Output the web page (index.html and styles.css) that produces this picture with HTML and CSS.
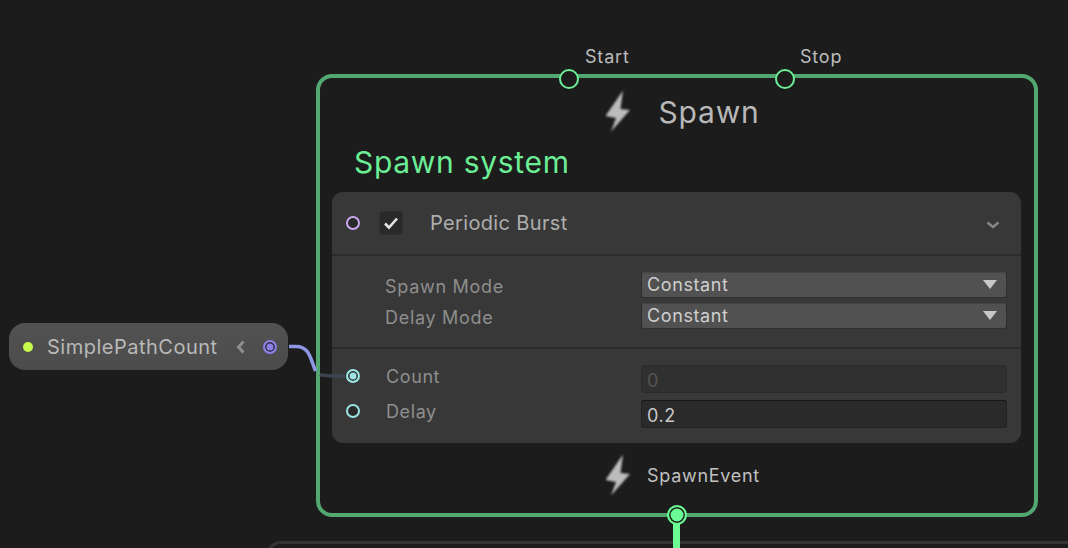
FILE: index.html
```html
<!DOCTYPE html>
<html lang="en">
<head>
  <meta charset="UTF-8">
  <title>Spawn system</title>
  <link rel="stylesheet" href="styles.css">
</head>
<body>

<div class="canvas">

  <div class="next-node"></div>

  <div class="param">
    <span class="param-dot"></span>
    <span class="param-name">SimplePathCount</span>
    <svg class="param-chevron" width="10" height="14" viewBox="0 0 10 14"><path d="M7.500 1.500 2.500 7l5 5.500" fill="none" stroke="#8e8e8e" stroke-width="3"/></svg>
    <span class="port port-out"></span>
  </div>

  <div class="context">
    <div class="context-title">
      <svg class="bolt" width="28" height="42" viewBox="0 0 28 42"><path class="bolt-shape" d="M18 .5 .5 26 11 28 6 41.500 25 20 15.500 19Z"/></svg>
      <span>Spawn</span>
    </div>
    <div class="context-name">Spawn system</div>

    <div class="block">
      <div class="block-head">
        <span class="port port-flow"></span>
        <span class="check">
          <svg width="16" height="14" viewBox="0 0 16 14"><path d="M2 7.500 6 11.500 14 2.500" fill="none" stroke="#e4e4e4" stroke-width="2.600"/></svg>
        </span>
        <span class="block-title">Periodic Burst</span>
        <svg class="block-chevron" width="14" height="8" viewBox="0 0 14 8"><path d="M1.500 1.500 7 6l5.500-4.500" fill="none" stroke="#858585" stroke-width="2.600"/></svg>
      </div>

      <div class="block-settings">
        <div class="row">
          <span class="row-label">Spawn Mode</span>
          <div class="dropdown"><span>Constant</span><span class="arrow"></span></div>
        </div>
        <div class="row">
          <span class="row-label">Delay Mode</span>
          <div class="dropdown"><span>Constant</span><span class="arrow"></span></div>
        </div>
      </div>

      <div class="block-inputs">
        <div class="row">
          <span class="port port-value connected"></span>
          <span class="row-label">Count</span>
          <div class="field disabled">0</div>
        </div>
        <div class="row">
          <span class="port port-value"></span>
          <span class="row-label">Delay</span>
          <div class="field">0.2</div>
        </div>
      </div>
    </div>

    <div class="context-foot">
      <svg class="bolt" width="28" height="42" viewBox="0 0 28 42"><path class="bolt-shape" d="M18 .5 .5 26 11 28 6 41.500 25 20 15.500 19Z"/></svg>
      <span>SpawnEvent</span>
    </div>
  </div>

  <svg class="wire" width="70" height="50" viewBox="0 0 70 50">
    <path d="M0 7.500H7C20 7.500 21 18 26.500 32" fill="none" stroke="#8f96e4" stroke-width="3.500"/>
    <path d="M31 35.500C34 37 40 37 56 37" fill="none" stroke="#3d4650" stroke-width="3.500"/>
  </svg>

  <span class="flow-label start">Start</span>
  <span class="flow-label stop">Stop</span>
  <span class="flow-port start"></span>
  <span class="flow-port stop"></span>

  <div class="flow-wire"></div>
  <span class="flow-out"></span>

</div>

</body>
</html>
```

FILE: styles.css
```css
body {
  margin: 0;
  background: #1c1c1c;
  font-family: Inter, "Liberation Sans", sans-serif;
  color: #bdbdbd;
}
.canvas {
  position: relative;
  width: 1068px;
  height: 548px;
  overflow: hidden;
}

/* nodes sit on the graph canvas */
.context {
  position: absolute;
  left: 316px;
  top: 74px;
  width: 722px;
  height: 443px;
  box-sizing: border-box;
  border: 4px solid #52a870;
  border-radius: 16px;
  padding: 0 13px 0 12px;
  display: flex;
  flex-direction: column;
}
.next-node {
  position: absolute;
  left: 266px;
  top: 541px;
  width: 900px;
  height: 40px;
  box-sizing: border-box;
  border: 3px solid #333;
  border-radius: 15px;
}
.param {
  position: absolute;
  left: 9px;
  top: 323px;
  width: 279px;
  height: 47px;
  box-sizing: border-box;
  padding: 0 11px 0 14px;
  border-radius: 16px;
  background: linear-gradient(#525252, #4b4b4b);
  display: flex;
  align-items: center;
}
.param-dot {
  width: 10px;
  height: 10px;
  border-radius: 50%;
  background: #c6fb4b;
}
.param-name {
  margin-left: 14px;
  font-size: 20px;
  letter-spacing: 0.5px;
  color: #b9b9b9;
}
.param-chevron {
  margin-left: auto;
  margin-right: 17px;
}

.port {
  display: block;
  flex: none;
  box-sizing: border-box;
  width: 14px;
  height: 14px;
  border-radius: 50%;
  border: 2px solid #9ee;
  background: #2a2a2a;
}
.port-out {
  border-color: #8b7fe8;
  background: #8b7fe8;
  box-shadow: inset 0 0 0 1.500px #2b2b33;
}
.port-flow {
  border-color: #c9a9f0;
}
.port-value {
  border-color: #9be4e4;
}
.port-value.connected {
  background: #9be4e4;
  box-shadow: inset 0 0 0 1.500px #2a2a2a;
}

.context-title {
  height: 68px;
  flex: none;
  padding-left: 12px;
  display: flex;
  align-items: center;
  justify-content: center;
  gap: 25px;
  font-size: 30px;
  letter-spacing: 0.8px;
  color: #b8b8b8;
}
.context-title .bolt {
  margin-top: -3px;
}
.context-name {
  height: 45px;
  flex: none;
  margin: 1px 0 0 22px;
  font-size: 30px;
  letter-spacing: 0.7px;
  line-height: 30px;
  color: #6bee96;
}
.context-foot {
  flex: 1;
  display: flex;
  align-items: center;
  justify-content: center;
  gap: 14px;
  padding: 0 0 6px 12px;
  font-size: 18px;
  letter-spacing: 0.7px;
  color: #c0c0c0;
}
.bolt-shape {
  fill: #bcbcbc;
  filter: blur(0.8px);
}

.block {
  flex: none;
  background: #383838;
  border-radius: 11px;
  height: 251px;
  display: flex;
  flex-direction: column;
}
.block-head {
  height: 64px;
  flex: none;
  box-sizing: border-box;
  display: flex;
  align-items: center;
  padding: 0 21px 0 14px;
  border-bottom: 2px solid #2b2b2b;
}
.check {
  width: 24px;
  height: 24px;
  margin-left: 19px;
  box-sizing: border-box;
  border: 1px solid #303030;
  border-radius: 3px;
  background: #292929;
  display: flex;
  align-items: center;
  justify-content: center;
}
.block-title {
  margin-left: 27px;
  font-size: 20px;
  letter-spacing: 0.35px;
  color: #aeaeae;
}
.block-chevron {
  margin: 4px 0 0 auto;
}
.block-settings {
  height: 93px;
  flex: none;
  box-sizing: border-box;
  padding: 16px 14px 0 53px;
  border-bottom: 2px solid #2b2b2b;
  display: flex;
  flex-direction: column;
  gap: 5px;
}
.block-inputs {
  flex: 1;
  padding: 16px 14px 0 14px;
  display: flex;
  flex-direction: column;
  gap: 7px;
}
.row {
  display: flex;
  align-items: center;
  font-size: 18px;
  letter-spacing: 0.6px;
}
.row-label {
  color: #8e8e8e;
}
.block-settings .row-label {
  width: 256px;
  padding-top: 3px;
  letter-spacing: 0.7px;
}
.block-inputs .row .port,
.block-inputs .row-label {
  margin-bottom: 6px;
}
.block-inputs .row-label {
  width: 255px;
  margin-left: 26px;
}
.dropdown {
  flex: 1;
  height: 26px;
  box-sizing: border-box;
  padding: 0 9px 2px 5px;
  background: #515151;
  border: 1px solid #2f2f2f;
  border-top-color: #444;
  border-radius: 3px;
  display: flex;
  align-items: center;
  justify-content: space-between;
  color: #cfcfcf;
}
.arrow {
  width: 0;
  height: 0;
  margin-top: 1px;
  border-left: 7px solid transparent;
  border-right: 7px solid transparent;
  border-top: 9px solid #c8c8c8;
}
.field {
  flex: 1;
  height: 28px;
  box-sizing: border-box;
  padding: 2px 5px 0;
  line-height: 26px;
  background: #2a2a2a;
  border: 1px solid #212121;
  border-top-color: #171717;
  border-radius: 3px;
  color: #c8c8c8;
}
.field.disabled {
  background: #303030;
  border-color: #2b2b2b;
  color: #555;
}

.wire {
  position: absolute;
  left: 289px;
  top: 339px;
}
.flow-label {
  position: absolute;
  top: 46px;
  font-size: 18px;
  letter-spacing: 0.8px;
  color: #bcbcbc;
}
.flow-label.start {
  left: 585px;
}
.flow-label.stop {
  left: 800px;
}
.flow-port {
  position: absolute;
  top: 69px;
  box-sizing: border-box;
  width: 20px;
  height: 20px;
  border-radius: 50%;
  border: 2px solid #6bee96;
  background: #1c1c1c;
}
.flow-port.start {
  left: 559px;
}
.flow-port.stop {
  left: 775px;
}
.flow-wire {
  position: absolute;
  left: 673px;
  top: 515px;
  width: 7px;
  height: 33px;
  background: #6bfb94;
}
.flow-out {
  position: absolute;
  left: 667px;
  top: 505px;
  box-sizing: border-box;
  width: 20px;
  height: 20px;
  border-radius: 50%;
  border: 2px solid #6bfb94;
  background: #6bfb94;
  box-shadow: inset 0 0 0 1.500px #1c1c1c;
}
```
